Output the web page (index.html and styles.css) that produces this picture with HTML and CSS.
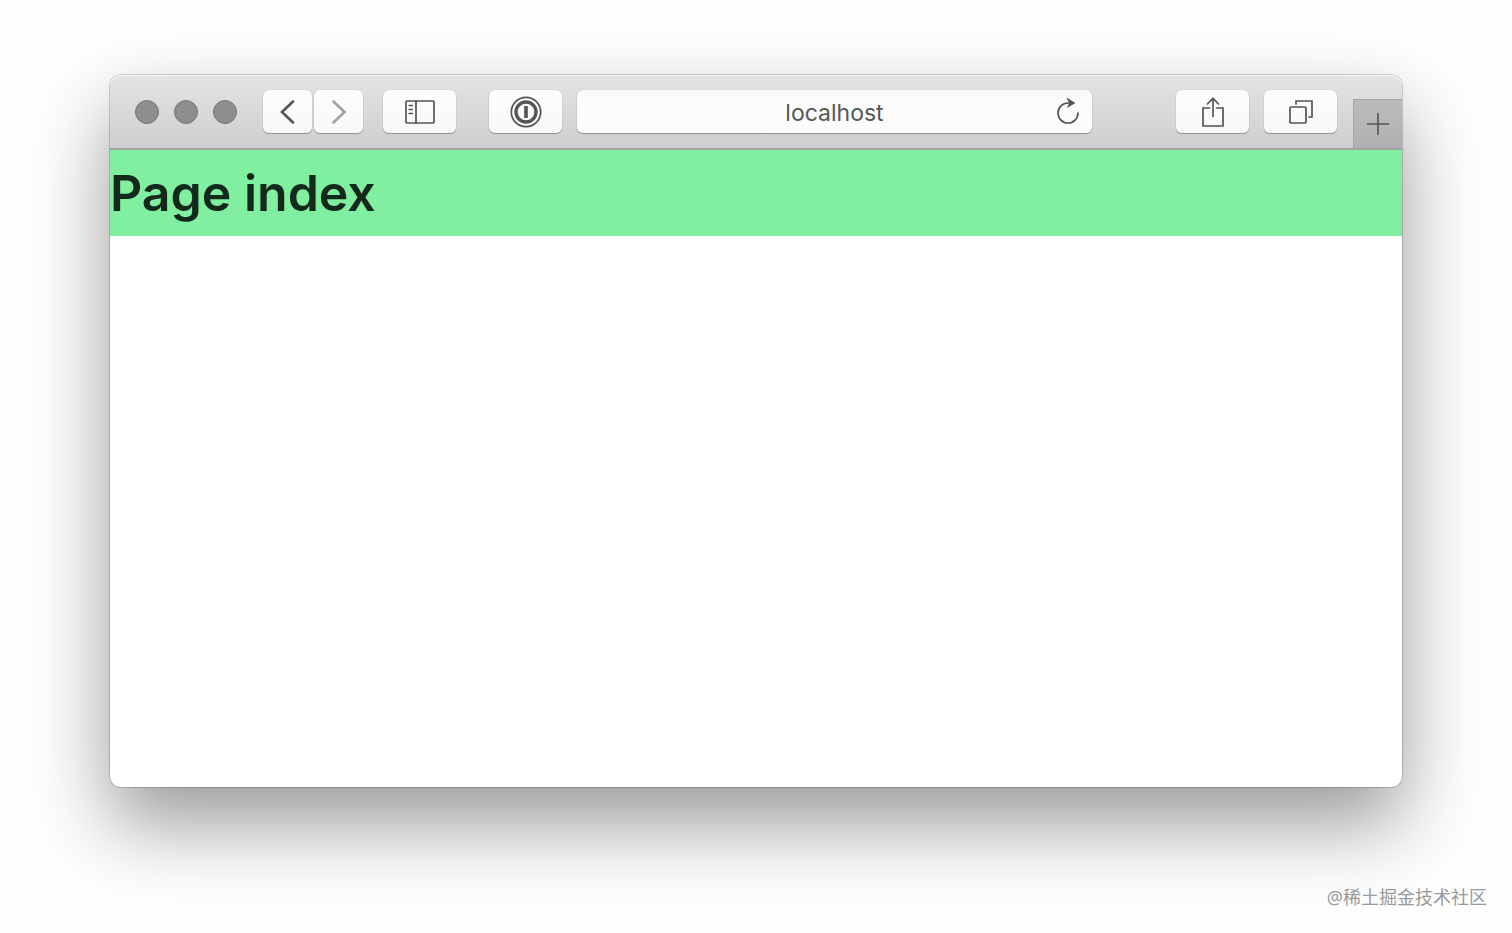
FILE: index.html
```html
<!DOCTYPE html>
<html lang="en">
<head>
  <meta charset="UTF-8">
  <meta name="viewport" content="width=device-width, initial-scale=1.0">
  <title>Page index</title>
  <link rel="stylesheet" href="styles.css">
</head>
<body>
  <main class="window">
    <header class="toolbar">
      <div class="lights">
        <span class="light"></span>
        <span class="light"></span>
        <span class="light"></span>
      </div>

      <nav class="history">
        <button class="btn btn-small" type="button" aria-label="Back">
          <svg width="16" height="26" viewBox="0 0 16 26"><path d="M13 2.500 L2 13 L13 23.500" stroke-width="2.600"/></svg>
        </button>
        <button class="btn btn-small btn-disabled" type="button" aria-label="Forward">
          <svg width="16" height="26" viewBox="0 0 16 26"><path d="M2.500 2.500 L13.500 13 L2.500 23.500" stroke-width="2.600"/></svg>
        </button>
      </nav>

      <button class="btn btn-sidebar" type="button" aria-label="Show sidebar">
        <svg width="30" height="24" viewBox="0 0 30 24">
          <rect x="1" y="1" width="28" height="22" rx="1" stroke-width="1.700"/>
          <path d="M11 1 V23" stroke-width="1.700"/>
          <path d="M4 5.500 H7.500 M4 9.500 H7.500 M4 13.500 H7.500" stroke-width="1.300"/>
        </svg>
      </button>

      <button class="btn btn-password" type="button" aria-label="Password manager">
        <svg width="32" height="32" viewBox="0 0 32 32">
          <circle cx="16" cy="16" r="14.700" stroke-width="1.700"/>
          <circle cx="16" cy="16" r="10" stroke-width="3.300"/>
          <path d="M16 10 V22" stroke-width="3.600" stroke-linecap="butt"/>
        </svg>
      </button>

      <div class="address">
        <input class="address-input" type="text" value="localhost" aria-label="Address">
        <button class="reload" type="button" aria-label="Reload">
          <svg width="24" height="28" viewBox="0 0 24 28">
            <path d="M22 16 A10 10 0 1 1 12 6 H14" stroke-width="1.700"/>
            <path class="solid" d="M10.500 0.500 L19.500 6 L11 11 L13 6 Z"/>
          </svg>
        </button>
      </div>

      <button class="btn" type="button" aria-label="Share">
        <svg width="24" height="32" viewBox="0 0 24 32">
          <path d="M8.500 12 H2 V30 H22 V12 H15.500" stroke-width="1.700"/>
          <path d="M12 20.500 V2.500 M6.500 8 L12 2.200 L17.500 8" stroke-width="1.700"/>
        </svg>
      </button>

      <button class="btn btn-tabs" type="button" aria-label="Show all tabs">
        <svg width="26" height="26" viewBox="0 0 26 26">
          <rect x="2" y="8" width="16" height="16" rx="1" stroke-width="1.700"/>
          <path d="M8 5 V2 H24 V18 H21" stroke-width="1.700"/>
        </svg>
      </button>

      <button class="new-tab" type="button" aria-label="New tab">
        <svg width="24" height="24" viewBox="0 0 24 24"><path d="M12 1.500 V22.500 M1.500 12 H22.500" stroke-width="1.600"/></svg>
      </button>
    </header>

    <section class="page">
      <h1 class="page-title">Page index</h1>
    </section>
  </main>

  <footer class="credit">@稀土掘金技术社区</footer>
</body>
</html>
```

FILE: styles.css
```css
:root {
  --icon-color: #525554;
  --page-green: #80f0a0;
}

* {
  box-sizing: border-box;
}

body {
  margin: 0;
  min-height: 100vh;
  display: flex;
  flex-direction: column;
  background-color: #fefefe;
  font-family: Inter, "Liberation Sans", sans-serif;
}

.window {
  flex: 1;
  display: flex;
  flex-direction: column;
  margin: 75px 110px 0;
  border-radius: 11px;
  background-color: #fff;
  box-shadow: 0 0 0 1px rgba(0, 0, 0, 0.18), 0 37px 80px rgba(0, 0, 0, 0.4);
}

/* Toolbar */
.toolbar {
  display: flex;
  align-items: center;
  height: 75px;
  padding-left: 25px;
  border-bottom: 2px solid #a2a4a3;
  border-radius: 11px 11px 0 0;
  background: linear-gradient(#e4e4e4, #cfcfcf);
  box-shadow: inset 0 1px 0 #f8f8f8;
}

svg {
  display: block;
  fill: none;
  stroke: var(--icon-color);
  stroke-width: 2;
  stroke-linecap: round;
}

.solid {
  fill: var(--icon-color);
  stroke: none;
}

.lights {
  display: flex;
  gap: 15px;
  margin-right: 26px;
}

.light {
  width: 24px;
  height: 24px;
  border: 1px solid #777;
  border-radius: 50%;
  background-color: #8e8e8e;
}

.history {
  display: flex;
  gap: 2px;
}

.btn {
  display: flex;
  align-items: center;
  justify-content: center;
  width: 73px;
  height: 43px;
  padding: 0;
  border: none;
  border-radius: 6px;
  background: linear-gradient(#fdfdfd, #f8f8f8);
  box-shadow: 0 0 1px rgba(0, 0, 0, 0.3), 0 1px 1px rgba(0, 0, 0, 0.3);
}

.btn-small {
  width: 49px;
}

.btn-disabled svg {
  stroke: #a0a0a0;
}

.btn-sidebar {
  margin-left: 20px;
}

.btn-password {
  margin-left: 33px;
}

.btn-tabs {
  margin: 0 16px 0 15px;
}

.address {
  position: relative;
  flex: 1;
  margin: 0 84px 0 15px;
}

.address-input {
  display: block;
  width: 100%;
  height: 43px;
  padding: 3px 40px 0;
  border: none;
  border-radius: 6px;
  background: linear-gradient(#fafafa, #fdfdfd);
  box-shadow: 0 0 1px rgba(0, 0, 0, 0.3), 0 1px 1px rgba(0, 0, 0, 0.3);
  color: #555857;
  font-family: inherit;
  font-size: 23px;
  text-align: center;
}

.reload {
  position: absolute;
  top: 7px;
  right: 12px;
  padding: 0;
  border: none;
  background: none;
}

.new-tab {
  display: flex;
  align-items: center;
  justify-content: center;
  align-self: flex-end;
  width: 49px;
  height: 49px;
  padding: 0;
  border: none;
  border-left: 1px solid #a6a6a6;
  border-top: 1px solid #a6a6a6;
  background: linear-gradient(#bcbcbc, #b0b0b0);
}

/* Page */
.page {
  background-color: var(--page-green);
}

.page-title {
  margin: 0;
  color: #12291b;
  font-size: 50px;
  font-weight: 600;
  line-height: 86px;
}

.credit {
  height: 146px;
  padding: 97px 25px 0;
  color: #999;
  font-family: "Noto Sans", "Noto Sans CJK SC", sans-serif;
  font-size: 18px;
  line-height: 26px;
  text-align: right;
  position: relative;
}
```
